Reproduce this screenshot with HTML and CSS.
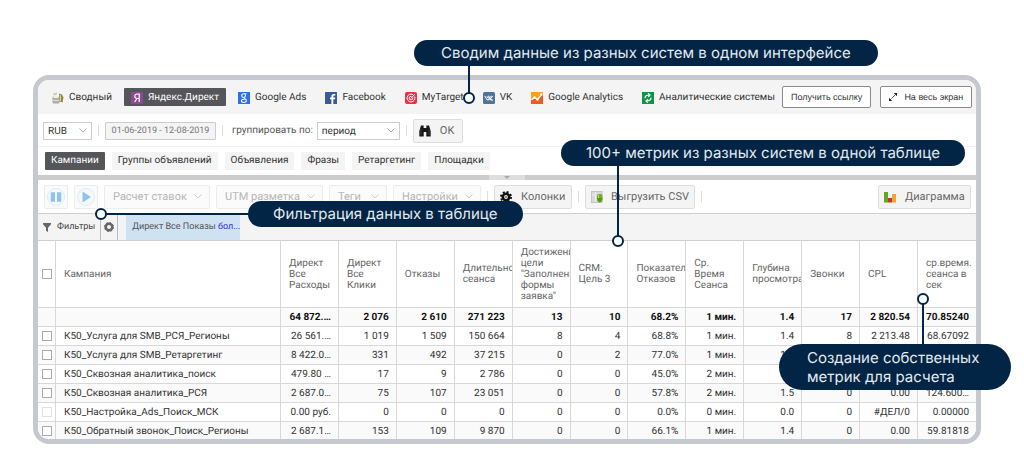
FILE: index.html
```html
<!DOCTYPE html>
<html lang="ru">
<head>
<meta charset="utf-8">
<title>Статистика кампаний</title>
<link rel="stylesheet" href="styles.css">
</head>
<body>
<main class="stage">
<div class="window">
  <header class="topbar">
    <nav class="sources">
      <a class="source" href="#"><svg class="icon" viewBox="0 0 12 12"><path d="M1 1.5l4-1v2l-3 1z" fill="#c9c9c2"/><rect x="0.5" y="4" width="7" height="7.5" rx="1.5" fill="#a9aaa0"/><ellipse cx="4" cy="5" rx="3" ry="1.2" fill="#f0efe4"/><path d="M1 8c2 1 4 1 6 0" stroke="#eee" fill="none"/><path d="M7 1.5l3 1 1.5 3-1 5-3-1z" fill="#8b8a55"/><path d="M8.5 3v6" stroke="#d6d48c"/></svg>Сводный</a>
      <a class="source source-active" href="#"><svg class="icon" viewBox="0 0 12 12"><rect width="12" height="12" fill="#8e4a91"/><path d="M8.2 10V2H6.3C4.600 2 3.800 3 3.800 4.300S4.700 6.500 6.200 6.500H8.200M6 6.500L3.700 10" stroke="#fff" stroke-width="1.200" fill="none"/></svg>Яндекс.Директ</a>
      <a class="source" href="#"><svg class="icon" viewBox="0 0 12 12"><rect width="12" height="12" fill="#2f6fee"/><path d="M8.500 1.700H6C4.500 1.700 3.700 2.600 3.700 3.700S4.500 5.500 5.700 5.500 7.500 4.700 7.500 3.600 6.900 1.800 6 1.800M5.900 5.600C5.500 6.400 8.400 6.800 8.400 8.600 8.400 9.800 7.300 10.500 5.800 10.500S3.400 9.800 3.400 8.800 4.500 7.300 6.500 7.300" stroke="#fff" stroke-width="1.100" fill="none"/></svg>Google Ads</a>
      <a class="source" href="#"><svg class="icon" viewBox="0 0 12 12"><rect width="12" height="12" rx="0.500" fill="#3b5a9a"/><path d="M8.300 12V7.300H10L10.200 5.500H8.300V4.400C8.300 3.800 8.600 3.500 9.200 3.500H10.300V1.900H8.800C7.100 1.900 6.400 2.900 6.400 4.200V5.500H5V7.300H6.400V12z" fill="#fff"/></svg>Facebook</a>
      <a class="source" href="#"><svg class="icon" viewBox="0 0 12 12"><rect width="12" height="12" rx="2" fill="#ec2f43"/><path d="M8 2.700A3.900 3.900 0 1 0 9.600 4.600M6.500 4.400A1.800 1.800 0 1 0 7.700 5.700M6 6.200L9.800 2.300" stroke="#fff" stroke-width="1" fill="none"/></svg>MyTarget</a>
      <a class="source source-vk" href="#"><svg class="icon" viewBox="0 0 12 12"><rect width="12" height="12" rx="1.500" fill="#4e739c"/><path d="M1.800 4L4 7.800H6V4.200H5M6 6L8.800 4M4 4.200L5 6.200M7 6L9.600 8.200H8.200L6 6.600M9.800 4L8 6" stroke="#fff" stroke-width="1" fill="none"/></svg>VK</a>
      <a class="source" href="#"><svg class="icon" viewBox="0 0 12 12"><rect width="12" height="12" rx="0.500" fill="#f9a11b"/><path d="M0 8L3.500 5.500 6.500 8 12 1.500V12H0z" fill="#ee5a22"/><path d="M0.500 7.800L3.500 5.400 6.500 7.600 11 2" stroke="#fff" stroke-width="1.300" fill="none"/><circle cx="3.500" cy="5.500" r="1.200" fill="#fff"/><circle cx="6.500" cy="7.500" r="1.200" fill="#fff"/><circle cx="10.300" cy="2.500" r="1.200" fill="#fff"/></svg>Google Analytics</a>
      <a class="source" href="#"><svg class="icon" viewBox="0 0 12 12"><rect width="12" height="12" fill="#129447"/><path d="M3 6.200C3 4 4.500 3 7.500 3M6 1.400L8 3 6.300 4.800M9 5.800C9 8 7.500 9 4.500 9M6 7.200L4 9 5.800 10.600" stroke="#fff" stroke-width="1.200" fill="none"/></svg>Аналитические системы</a>
    </nav>
    <div class="actions">
      <button class="outline">Получить ссылку</button>
      <button class="outline"><svg class="expand" viewBox="0 0 8 8"><path d="M1.500 6.500L6.500 1.500" stroke="#222" stroke-dasharray="1.200 .6"/><path d="M4.800 0H8V3.200zM0 4.800V8H3.200z" fill="#222"/></svg>На весь экран</button>
    </div>
  </header>

  <form class="params">
    <span class="select select-currency"><select aria-label="Валюта"><option>RUB</option></select><svg class="chevron" viewBox="0 0 8 5"><path d="M.5 .5L4 4 7.500 .5"/></svg></span>
    <i class="sep"></i>
    <input class="dates" type="text" aria-label="Период дат" value="01-06-2019 - 12-08-2019">
    <i class="sep"></i>
    <label class="group-label" for="group">группировать по:</label>
    <span class="select select-group"><select id="group"><option>период</option></select><svg class="chevron" viewBox="0 0 8 5"><path d="M.5 .5L4 4 7.500 .5"/></svg></span>
    <i class="sep"></i>
    <button class="tool tool-ok" type="button"><svg class="icon" viewBox="0 0 12 12"><path d="M2 .5h2.600V3H7.400V.5H10L11.700 6V11.500H7.300V7H4.700V11.500H.3V6z" fill="#161616"/><path d="M2 4v6M10 4v6" stroke="#555" stroke-width=".6"/></svg>OK</button>
  </form>

  <nav class="tabs">
    <a class="tab tab-active" href="#">Кампании</a>
    <a class="tab" href="#">Группы объявлений</a>
    <a class="tab" href="#">Объявления</a>
    <a class="tab" href="#">Фразы</a>
    <a class="tab" href="#">Ретаргетинг</a>
    <a class="tab" href="#">Площадки</a>
  </nav>

  <div class="splitter"><button class="collapse" aria-label="Свернуть"><svg viewBox="0 0 8 3"><path d="M1 0H7L4 3z" fill="#aaa"/></svg></button></div>

  <div class="toolbar">
    <button class="tool tool-square" disabled aria-label="Пауза"><svg viewBox="0 0 18 18"><circle cx="9" cy="9" r="8.500" fill="#f4f9fd" stroke="#dcebf7"/><path d="M3.800 4.200H8V13.800H3.800zM10 4.200H14.200V13.800H10z" fill="#8fc3e8"/></svg></button>
    <button class="tool tool-square" disabled aria-label="Запуск"><svg viewBox="0 0 18 18"><circle cx="9" cy="9" r="8.500" fill="#f4f9fd" stroke="#dcebf7"/><path d="M5.500 3.500L14 9 5.500 14.500z" fill="#8fc3e8"/></svg></button>
    <button class="tool tool-menu menu-rates" disabled>Расчет ставок<svg class="chevron" viewBox="0 0 8 5"><path d="M.5 .5L4 4 7.500 .5"/></svg></button>
    <button class="tool tool-menu menu-utm" disabled>UTM разметка<svg class="chevron" viewBox="0 0 8 5"><path d="M.5 .5L4 4 7.500 .5"/></svg></button>
    <button class="tool tool-menu menu-tags" disabled>Теги<svg class="chevron" viewBox="0 0 8 5"><path d="M.5 .5L4 4 7.500 .5"/></svg></button>
    <button class="tool tool-menu menu-settings" disabled>Настройки<svg class="chevron" viewBox="0 0 8 5"><path d="M.5 .5L4 4 7.500 .5"/></svg></button>
    <i class="sep"></i>
    <button class="tool tool-columns"><svg class="icon" viewBox="0 0 12 12"><circle cx="6" cy="6" r="5" fill="none" stroke="#111" stroke-width="2" stroke-dasharray="2 1.930"/><circle cx="6" cy="6" r="3.200" fill="none" stroke="#111" stroke-width="2.600"/><circle cx="6" cy="6" r="1" fill="#777"/></svg>Колонки</button>
    <i class="sep"></i>
    <button class="tool tool-export"><svg class="icon" viewBox="0 0 12 12"><rect x=".5" y=".5" width="10.500" height="11" fill="#d9d9d9" stroke="#c4c4c4"/><path d="M1 4H5M4.500 1V11" stroke="#eee"/><rect x="6" y="3" width="5.500" height="8" rx="2" fill="#74ad1e"/><path d="M6 7H11.500L8.750 12z" fill="#5a9412"/><path d="M7.500 4V7" stroke="#b5dc6a"/></svg>Выгрузить CSV</button>
    <i class="sep"></i>
    <button class="tool tool-chart"><svg class="icon" viewBox="0 0 12 12"><rect y="1" width="4" height="10.500" fill="#5fa822"/><rect x="4" y="7" width="4" height="4.500" fill="#c8322c"/><rect x="8" y="3" width="4" height="8.500" fill="#f0a52e"/></svg>Диаграмма</button>
  </div>

  <div class="filters">
    <button class="filter-btn"><svg class="funnel" viewBox="0 0 8 9"><path d="M0 0H8V1.200L5 4.800V9L3 7.800V4.800L0 1.200z" fill="#666"/></svg>Фильтры</button>
    <button class="filter-btn filter-gear" aria-label="Настройка фильтров"><svg viewBox="0 0 10 10"><circle cx="5" cy="5" r="3.300" fill="none" stroke="#666" stroke-width="2.600"/><circle cx="5" cy="5" r="4.500" fill="none" stroke="#666" stroke-width="1" stroke-dasharray="1.800 1.730"/></svg></button>
    <span class="chip">Директ Все Показы <a href="#">бол...</a></span>
  </div>

  <table class="grid">
    <colgroup><col class="col-check"><col class="col-name"><col span="12"></colgroup>
    <thead>
      <tr><th><input type="checkbox" aria-label="Выбрать все"></th><th>Кампания</th><th>Директ<br>Все<br>Расходы</th><th>Директ<br>Все<br>Клики</th><th>Отказы</th><th>Длительно<br>сеанса</th><th>Достижени<br>цели<br>"Заполнени<br>формы<br>заявка"</th><th>CRM:<br>Цель 3</th><th>Показатель<br>Отказов</th><th>Ср.<br>Время<br>Сеанса</th><th>Глубина<br>просмотра</th><th>Звонки</th><th>CPL</th><th>ср.время.<br>сеанса в<br>сек</th></tr>
    </thead>
    <tbody>
      <tr class="total"><td></td><td></td><td>64 872.…</td><td>2 076</td><td>2 610</td><td>271 223</td><td>13</td><td>10</td><td>68.2%</td><td>1 мин.</td><td>1.4</td><td>17</td><td>2 820.54</td><td>70.85240</td></tr>
      <tr><td><input type="checkbox" aria-label="Выбрать строку 1"></td><td>К50_Услуга для SMB_РСЯ_Регионы</td><td>26 561.…</td><td>1 019</td><td>1 509</td><td>150 664</td><td>8</td><td>4</td><td>68.8%</td><td>1 мин.</td><td>1.4</td><td>8</td><td>2 213.48</td><td>68.67092</td></tr>
      <tr><td><input type="checkbox" aria-label="Выбрать строку 2"></td><td>К50_Услуга для SMB_Ретаргетинг</td><td>8 422.0…</td><td>331</td><td>492</td><td>37 215</td><td>0</td><td>2</td><td>77.0%</td><td>1 мин.</td><td>1.4</td><td></td><td></td><td></td></tr>
      <tr><td><input type="checkbox" aria-label="Выбрать строку 3"></td><td>К50_Сквозная аналитика_поиск</td><td>479.80 …</td><td>17</td><td>9</td><td>2 786</td><td>0</td><td>0</td><td>45.0%</td><td>2 мин.</td><td></td><td></td><td></td><td></td></tr>
      <tr><td><input type="checkbox" aria-label="Выбрать строку 4"></td><td>К50_Сквозная аналитика_РСЯ</td><td>2 687.0…</td><td>75</td><td>107</td><td>23 051</td><td>0</td><td>0</td><td>57.8%</td><td>2 мин.</td><td>1.5</td><td>0</td><td>0.00</td><td>124.600…</td></tr>
      <tr><td><input type="checkbox" disabled aria-label="Выбрать строку 5"></td><td>К50_Настройка_Ads_Поиск_МСК</td><td>0.00 руб.</td><td>0</td><td>0</td><td>0</td><td>0</td><td>0</td><td>0.0%</td><td>0 мин.</td><td>0.0</td><td>0</td><td>#ДЕЛ/0</td><td>0.00000</td></tr>
      <tr><td><input type="checkbox" aria-label="Выбрать строку 6"></td><td>К50_Обратный звонок_Поиск_Регионы</td><td>2 687.1…</td><td>153</td><td>109</td><td>9 870</td><td>0</td><td>0</td><td>66.1%</td><td>1 мин.</td><td>1.4</td><td>0</td><td>0.00</td><td>59.81818</td></tr>
    </tbody>
  </table>
</div>

<aside class="callout callout-sources">Сводим данные из разных систем в одном интерфейсе</aside>
<aside class="callout callout-metrics">100+ метрик из разных систем в одной таблице</aside>
<aside class="callout callout-filter">Фильтрация данных в таблице</aside>
<aside class="callout callout-custom">Создание собственных<br>метрик для расчета</aside>
</main>
</body>
</html>
```
FILE: styles.css
```css
*, *::before, *::after { box-sizing: border-box; }

body {
  margin: 0;
  background: #fff;
  color: #333;
  font: 10px/14px Roboto, "Liberation Sans", sans-serif;
  text-rendering: geometricPrecision;
}

button, input, select {
  margin: 0;
  font: inherit;
  color: inherit;
  text-rendering: inherit;
}

a { color: inherit; text-decoration: none; }
svg { display: block; flex: none; }

.stage { position: relative; padding: 75px 43px 32px 33px; }

.window {
  overflow: hidden;
  border: 5px solid #c5c8cf;
  border-radius: 16px;
  background: #fff;
}

.icon { width: 12px; height: 12px; }

/* Source navigation */
.topbar {
  display: flex;
  align-items: center;
  justify-content: space-between;
  height: 34px;
  padding: 0 5px 0 7px;
  background: #f4f4f4;
}

.sources { display: flex; gap: 5px; }

.source {
  display: flex;
  align-items: center;
  gap: 5px;
  height: 18px;
  padding: 1px 7px 0;
  white-space: nowrap;
}

.source-active { background: #55565a; color: #fff; border-radius: 1px; }
.actions { display: flex; gap: 9px; }

.outline {
  display: flex;
  align-items: center;
  gap: 7px;
  height: 22px;
  padding: 0 8px;
  border: 1px solid #8a8a8a;
  border-radius: 2px;
  background: #fff;
  font: 9px/12px "Liberation Sans", Arial, sans-serif;
  white-space: nowrap;
}

.expand { width: 8px; height: 8px; }

/* Report parameters */
.params {
  display: flex;
  align-items: center;
  height: 33px;
  padding: 1px 5px 0;
  border-bottom: 1px solid #f2f2f2;
}

.sep { flex: none; width: 1px; height: 11px; margin: 0 6px; background: #ddd; }

.select { display: grid; align-items: center; height: 18px; }

.select select {
  grid-area: 1 / 1;
  width: 100%;
  height: 18px;
  padding: 2px 4px 0;
  border: 1px solid #ccc;
  border-radius: 0;
  background: #fff;
  appearance: none;
}

.chevron { width: 8px; height: 5px; fill: none; stroke: #aaa; }
.select .chevron { grid-area: 1 / 1; justify-self: end; margin-right: 5px; pointer-events: none; }
.select-currency { width: 49px; }
.select-group { width: 83px; }

.dates {
  width: 111px;
  height: 18px;
  padding: 1px 0 0;
  border: 1px solid #ccc;
  border-radius: 1px;
  background: #f4f4f4;
  color: #777;
  font-size: 9px;
  text-align: center;
}

.group-label { margin: 0 4px 0 3px; color: #555; white-space: nowrap; }

.tool {
  display: flex;
  align-items: center;
  height: 24px;
  padding: 0 8px 0 5px;
  border: 1px solid #ddd;
  border-radius: 2px;
  background: #f4f4f4;
  color: #666;
  font-size: 11px;
  white-space: nowrap;
}

.tool-ok { width: 50px; gap: 9px; }

/* Entity tabs */
.tabs { display: flex; gap: 7px; height: 28px; padding: 5px 7px; }
.tab { padding: 2px 6px; background: #f4f4f4; white-space: nowrap; }
.tab-active { background: #55565a; color: #fff; border-radius: 1px; }

.splitter { display: flex; justify-content: center; height: 5px; background: #ccc; }

.collapse {
  display: flex;
  align-items: center;
  justify-content: center;
  width: 36px;
  height: 5px;
  padding: 0;
  border: 0;
  background: #dedede;
}

.collapse svg { width: 8px; height: 3px; }

/* Table toolbar */
.toolbar { display: flex; align-items: center; height: 33px; padding: 0 5px 0 6px; }

.tool-square, .tool-menu { border-color: #ececec; background: #fbfbfb; color: #b5b5b5; }
.tool-square { width: 24px; margin-right: 6px; padding: 0; justify-content: center; }
.tool-square svg { width: 18px; height: 18px; }
.tool-menu { justify-content: space-between; margin-right: 6px; padding: 0 7px 0 8px; }
.tool-menu .chevron { stroke: #ccc; }
.menu-rates { width: 106px; }
.menu-utm { width: 107px; }
.menu-tags { width: 58px; }
.menu-settings { width: 88px; margin-right: 0; }
.tool-columns { width: 78px; gap: 9px; }
.tool-export { width: 110px; gap: 8px; }
.tool-chart { width: 93px; gap: 9px; margin-left: auto; }

/* Filters */
.filters {
  display: flex;
  height: 27px;
  border-top: 1px solid #d0d0d0;
  background: #f4f4f4;
}

.filter-btn {
  display: flex;
  align-items: center;
  gap: 6px;
  padding: 0 5px;
  border: 0;
  border-right: 1px solid #bbb;
  background: #f4f4f4;
  color: #444;
  font-size: 9px;
}

.funnel { width: 8px; height: 9px; }
.filter-gear { width: 17px; padding: 0; justify-content: center; }
.filter-gear svg { width: 10px; height: 10px; }

.chip {
  align-self: stretch;
  margin-left: 8px;
  padding: 6px 0 0 6px;
  background: #cfe2f2;
  color: #555;
  font-size: 9px;
  white-space: nowrap;
}

.chip a { color: #3030e0; }

/* Report table */
.grid {
  width: 100%;
  table-layout: fixed;
  border-spacing: 0;
}

.col-check { width: 18px; }
.col-name { width: 225px; }

.grid th, .grid td {
  overflow: hidden;
  padding: 0 7px 0 8px;
  border-right: 1px solid #d8d8d8;
  border-bottom: 1px solid #d8d8d8;
  white-space: nowrap;
  vertical-align: middle;
}

.grid th:last-child, .grid td:last-child { border-right: 0; }

.grid th {
  height: 68px;
  padding-right: 0;
  border-top: 1px solid #d0d0d0;
  color: #666;
  font-weight: 400;
  line-height: 11px;
  text-align: left;
}

.grid td { height: 19px; padding-top: 2px; text-align: right; }
.grid td:nth-child(2) { text-align: left; }
.grid th:first-child, .grid td:first-child { padding-top: 0; padding-left: 4px; padding-right: 0; text-align: left; }
.grid tr:nth-child(odd) td { background: #fafafa; }
.grid .total td { background: #fff; color: #111; font-weight: 700; }
.grid tr:last-child td { height: 17px; border-bottom: 0; }

.grid input {
  display: block;
  width: 10px;
  height: 10px;
  border: 1px solid #aaa;
  background: #fff;
  appearance: none;
}

.grid input:disabled { border-color: #e2e2e2; }

/* Callouts lie over the window */
.callout {
  position: absolute;
  padding: 4px 25px;
  border-radius: 24px;
  background: #022445;
  color: #e4eaf0;
  font: 400 15px/18px Inter, "Open Sans", sans-serif;
  white-space: nowrap;
}

.callout::before {
  content: "";
  position: absolute;
  background: #022445;
}

.callout::after {
  content: "";
  position: absolute;
  width: 12px;
  height: 12px;
  border: 2px solid #022445;
  border-radius: 50%;
  background: #fff;
}

.callout-sources { left: 414px; top: 40px; padding: 4px 27px; }
.callout-sources::before { left: 54px; top: 26px; width: 2px; height: 28px; }
.callout-sources::after { left: 49px; top: 52px; }

.callout-metrics { left: 561px; top: 140px; }
.callout-metrics::before { left: 56px; top: 26px; width: 2px; height: 71px; }
.callout-metrics::after { left: 51px; top: 95px; }

.callout-filter { left: 248px; top: 201px; }
.callout-filter::before { right: 100%; top: 12px; width: 142px; height: 2px; }
.callout-filter::after { left: -153px; top: 7px; }

.callout-custom { left: 779px; top: 344px; padding: 4px 32px 4px 28px; line-height: 19px; }
.callout-custom::before { left: 143px; bottom: 100%; width: 2px; height: 40px; }
.callout-custom::after { left: 138px; top: -51px; }
```
